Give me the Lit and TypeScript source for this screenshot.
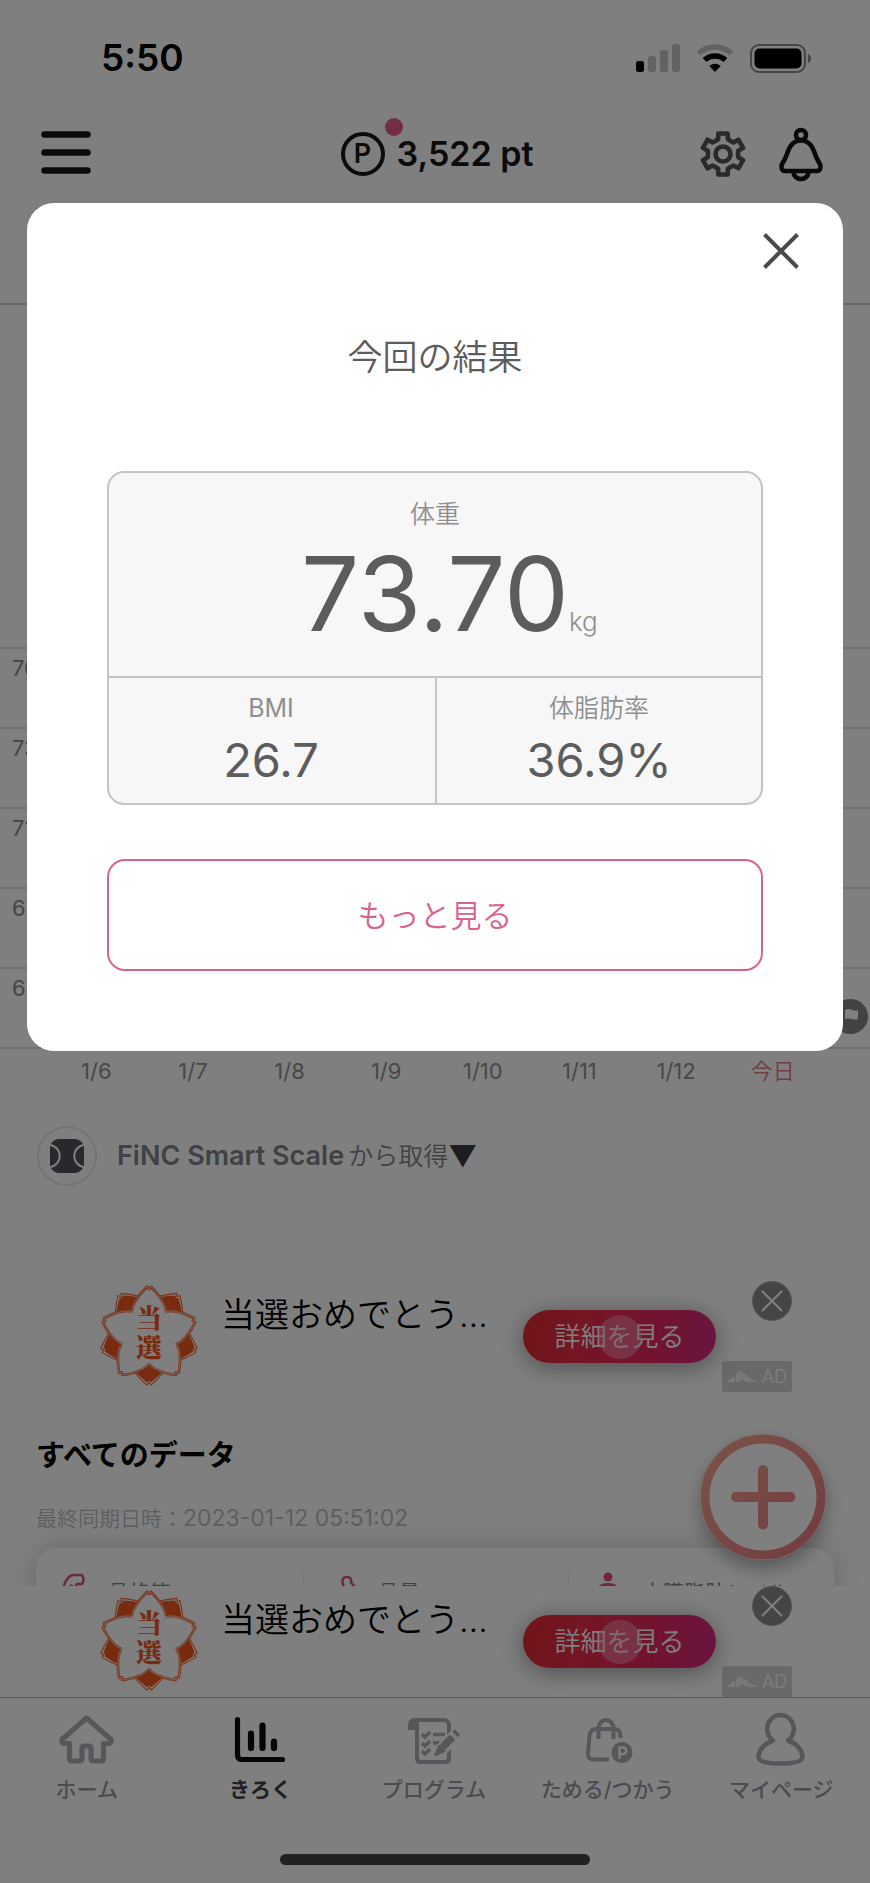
import { LitElement, html, svg, css } from "lit";
import { customElement } from "lit/decorators.js";

const GRID_LABELS = ["76", "73", "71", "68", "66"];
const DATES = ["1/6", "1/7", "1/8", "1/9", "1/10", "1/11", "1/12"];

function gearPath(cx: number, cy: number, outer: number, inner: number, teeth: number): string {
  const step = 360 / teeth;
  const at = (r: number, deg: number) => {
    const a = ((deg - 90) * Math.PI) / 180;
    return `${(cx + r * Math.cos(a)).toFixed(2)} ${(cy + r * Math.sin(a)).toFixed(2)}`;
  };
  const points: string[] = [];
  for (let i = 0; i < teeth; i++) {
    const c = i * step;
    points.push(at(inner, c - 18), at(outer, c - 13), at(outer, c + 13), at(inner, c + 18), at(inner - 0.6, c + 30));
  }
  return `M${points.join("L")}Z`;
}

@customElement("ad-banner")
export class AdBanner extends LitElement {
  static styles = css`
    :host { display: block; background: #fff; }
    .ad {
      display: grid;
      grid-template-columns: 104px 1fr 193px 76px;
      box-sizing: border-box;
      height: 111px;
      margin: 0 78px;
      padding-left: 19px;
    }
    .emblem { width: 104px; height: 104px; margin-top: 2px; border-radius: 22px; background: #fcfcfc; }
    .title {
      margin: 8px 0 0 20px;
      font-size: 34px;
      line-height: 52px;
      font-weight: 350;
      color: #000;
      white-space: nowrap;
    }
    .cta {
      position: relative;
      align-self: start;
      height: 53px;
      margin: 29px 0 0;
      padding: 0;
      border: 0;
      border-radius: 27px;
      background: linear-gradient(100deg, #e02a34, #ea2c48 30%, #e62860 65%, #d42a80);
      box-shadow: 0 4px 24px rgba(0, 0, 0, 0.4);
      color: #fff;
      font: inherit;
      font-size: 26px;
      line-height: 53px;
      font-weight: 350;
    }
    .tap {
      position: absolute;
      left: 50%;
      top: 50%;
      width: 44px;
      height: 44px;
      margin: -22px;
      border-radius: 50%;
      background: rgba(255, 170, 200, 0.45);
    }
    .side { display: flex; flex-direction: column; align-items: flex-end; justify-content: space-between; }
    .close { width: 40px; height: 40px; padding: 0; border: 0; background: none; }
    .badge {
      display: flex;
      align-items: center;
      justify-content: space-between;
      box-sizing: border-box;
      width: 70px;
      height: 31px;
      padding: 0 5px 0 4px;
      border-radius: 3px;
      background: #d2d2d5;
      color: #fff;
      font-size: 18px;
      font-weight: 300;
    }
    svg { display: block; }
  `;

  render() {
    const turns = [0, 72, 144, 216, 288];
    return html`
      <div class="ad">
        <svg class="emblem" viewBox="-52 -52 104 104" role="img" aria-label="当選">
          ${turns.map((t) => svg`
            <g transform="rotate(${t + 36})">
              <path d="M0 -24 L-15 -37 Q-8 -45 -2 -50 L0 -47.500 L2 -50 Q8 -45 15 -37Z" fill="#fff" stroke="#f0622c" stroke-width="1.1"/>
              <path d="M0 -24 L-14 -36.500 Q-7 -44 -1.500 -47.500 L0 -45.500 L1.500 -47.500 Q7 -44 14 -36.500Z" fill="#f0561c"/>
            </g>`)}
          ${turns.map((t) => svg`
            <g transform="rotate(${t})">
              <path d="M0 0 L-17 -23.400 C-17 -31 -9 -41 -2 -48 L0 -46 L2 -48 C9 -41 17 -31 17 -23.400Z" fill="#fff"/>
              <path d="M-17 -23.400 C-17 -31 -9 -41 -2 -48 L0 -46 L2 -48 C9 -41 17 -31 17 -23.400" fill="none" stroke="#f0622c" stroke-width="2.600" stroke-linejoin="round"/>
              <path d="M-17 -23.400 C-17 -31 -9 -41 -2 -48 L0 -46 L2 -48 C9 -41 17 -31 17 -23.400" fill="none" stroke="#f8e4da" stroke-width=".8"/>
            </g>`)}
          <g fill="#f0561c" font-family="Noto Serif CJK JP, Noto Sans CJK JP, sans-serif" font-weight="900" font-size="26" text-anchor="middle">
            <text x="0" y="-7">当</text>
            <text x="0" y="22">選</text>
          </g>
        </svg>
        <div class="title">当選おめでとう…</div>
        <button class="cta" type="button">詳細を見る<span class="tap"></span></button>
        <div class="side">
          <button class="close" type="button" aria-label="広告を閉じる">
            <svg width="40" height="40" viewBox="0 0 40 40">
              <circle cx="20" cy="20" r="19.500" fill="#8a8a90" stroke="#a4a4a8"/>
              <path d="M10.500 10.500l19 19M29.500 10.500l-19 19" stroke="#fff" stroke-width="2" stroke-linecap="round"/>
            </svg>
          </button>
          <div class="badge">
            <svg width="31" height="14" viewBox="0 0 31 14" fill="#f4f4f4">
              <path d="M0 12L9 6v6zM10 5l3-3v10h-3zM13.500 1l4 2v7h-4zM18 3.500l3 2V12l-3-1zM21.500 6l4 3v3.500h-4zM26 9l5 3h-5z"/>
            </svg>
            <span>AD</span>
          </div>
        </div>
      </div>
    `;
  }
}

@customElement("result-dialog")
export class ResultDialog extends LitElement {
  static styles = css`
    :host { display: block; }
    .dialog {
      display: flex;
      flex-direction: column;
      margin: 203px 27px 0;
      padding: 25px 39px 80px 80px;
      border-radius: 27px;
      background: #fff;
      color: #5c5c5c;
    }
    .close { align-self: flex-end; width: 46px; height: 46px; padding: 0; border: 0; background: none; }
    .close svg { display: block; }
    .body { padding-right: 41px; }
    h1 {
      margin: 55px 0 86px;
      font-size: 35px;
      line-height: 56px;
      font-weight: 350;
      text-align: center;
    }
    .results {
      display: grid;
      grid-template-columns: 1fr 1fr;
      margin: 0;
      border: 2px solid #c4c4c4;
      border-radius: 17px;
      background: #f7f7f7;
      text-align: center;
    }
    .cell { box-sizing: border-box; height: 125px; padding-top: 11px; }
    .weight { grid-column: 1 / -1; height: 205px; padding-top: 22px; border-bottom: 2px solid #c4c4c4; }
    .fat { border-left: 2px solid #c4c4c4; }
    dt { font-size: 25px; line-height: 38px; font-weight: 350; color: #8f8f8f; }
    .bmi { padding-right: 2px; }
    .bmi dt { font-weight: 400; }
    dd { margin: 0; font-size: 47px; line-height: 66px; }
    .weight dd { position: relative; display: inline-block; font-size: 103px; line-height: 122px; }
    .unit {
      position: absolute;
      left: 100%;
      bottom: 14px;
      font-size: 26px;
      line-height: 38px;
      font-weight: 350;
      color: #8f8f8f;
    }
    .more {
      display: block;
      width: 100%;
      height: 112px;
      margin-top: 54px;
      padding: 0 0 4px;
      border: 2px solid #d9638f;
      border-radius: 18px;
      background: #fff;
      color: #d9638f;
      font: inherit;
      font-size: 31px;
      font-weight: 350;
    }
  `;

  render() {
    return html`
      <section class="dialog" role="dialog" aria-labelledby="title">
        <button class="close" type="button" aria-label="閉じる">
          <svg width="46" height="46" viewBox="0 0 46 46">
            <path d="M6.500 6.500l33 33M39.500 6.500l-33 33" stroke="#4a4a4a" stroke-width="4"/>
          </svg>
        </button>
        <div class="body">
          <h1 id="title">今回の結果</h1>
          <dl class="results">
            <div class="cell weight">
              <dt>体重</dt>
              <dd>73.70<span class="unit">kg</span></dd>
            </div>
            <div class="cell bmi">
              <dt>BMI</dt>
              <dd>26.7</dd>
            </div>
            <div class="cell fat">
              <dt>体脂肪率</dt>
              <dd>36.9%</dd>
            </div>
          </dl>
          <button class="more" type="button">もっと見る</button>
        </div>
      </section>
    `;
  }
}

@customElement("app-root")
export class AppRoot extends LitElement {
  static styles = css`
    :host {
      display: block;
      position: relative;
      height: 100vh;
      overflow: hidden;
      background: #fff;
      font-family: Inter, "Noto Sans CJK JP", sans-serif;
    }
    svg { display: block; }
    button { padding: 0; border: 0; background: none; font: inherit; color: inherit; }
    .app { display: flex; flex-direction: column; height: 100%; }
    .status {
      display: flex;
      align-items: center;
      flex: none;
      height: 116px;
      padding: 0 59px 0 101px;
    }
    .time { flex: 1; font-size: 37px; line-height: 46px; font-weight: 600; color: #000; }
    .signals { display: flex; align-items: center; gap: 16px; }
    .header {
      display: grid;
      grid-template-columns: 1fr auto 1fr;
      align-items: center;
      flex: none;
      height: 76px;
      padding: 0 45px 0 41px;
      color: #161618;
    }
    .points {
      display: flex;
      align-items: center;
      gap: 12px;
      margin-left: 8px;
      font-size: 34px;
      line-height: 42px;
      font-weight: 600;
    }
    .coin {
      position: relative;
      display: flex;
      align-items: center;
      justify-content: center;
      box-sizing: border-box;
      width: 44px;
      height: 44px;
      border: 4px solid #161618;
      border-radius: 50%;
      font-size: 27px;
      font-weight: 600;
    }
    .dot {
      position: absolute;
      right: -22px;
      top: -18px;
      width: 18px;
      height: 18px;
      border-radius: 50%;
      background: #e85a8c;
    }
    .actions { display: flex; align-items: center; justify-content: flex-end; gap: 31px; }
    .scroll { flex: 1; min-height: 0; overflow: hidden; }
    .periods { height: 111px; border-bottom: 2px solid #d4d4d4; }
    .chart { position: relative; padding-top: 342px; }
    .gridrow {
      box-sizing: border-box;
      height: 80px;
      padding: 5px 12px;
      border-top: 2px solid #dedede;
      color: #8c8c8c;
      font-size: 22px;
      line-height: 28px;
    }
    .flag { position: absolute; right: 2px; bottom: 13px; }
    .dates {
      display: grid;
      grid-template-columns: repeat(8, 1fr);
      height: 78px;
      padding: 6px 49px 0 48px;
      border-top: 2px solid #dedede;
      box-sizing: border-box;
      color: #909090;
      font-size: 22px;
      line-height: 32px;
      text-align: center;
    }
    .today { color: #e07a84; font-weight: 350; }
    .source { display: flex; align-items: center; gap: 20px; height: 62px; padding: 0 37px; color: #808388; }
    .device {
      display: grid;
      place-items: center;
      box-sizing: border-box;
      width: 60px;
      height: 60px;
      border: 2px solid #e8e8ea;
      border-radius: 50%;
    }
    .from { display: flex; align-items: center; font-size: 25px; line-height: 38px; font-weight: 350; }
    .from strong { margin-right: 4px; font-size: 27px; font-weight: 600; }
    .from .caret { color: #3a3a3e; font-size: 29px; }
    .inline-ad { margin-top: 94px; }
    h2 { margin: 42px 36px 0; font-size: 29px; line-height: 44px; font-weight: 700; color: #000; }
    .sync { margin: 24px 36px 0; font-size: 21px; line-height: 32px; font-weight: 350; color: #bcbcc2; }
    .sync time { font-size: 23px; font-weight: 400; }
    .metrics {
      display: grid;
      grid-template-columns: repeat(3, 1fr);
      margin: 13px 36px 0;
      padding: 24px 0;
      border-radius: 20px;
      background: #fff;
      box-shadow: 0 0 30px rgba(0, 0, 0, 0.18);
    }
    .metric {
      display: flex;
      gap: 20px;
      height: 80px;
      padding-left: 24px;
      box-sizing: border-box;
      color: #808388;
      font-size: 21px;
      line-height: 42px;
      white-space: nowrap;
    }
    .metric + .metric { border-left: 2px solid #f2f2f2; }
    .bone { margin-left: 8px; }
    .fab {
      position: absolute;
      right: 44px;
      bottom: 323px;
      width: 126px;
      height: 126px;
      border-radius: 50%;
      box-shadow: 0 8px 18px rgba(0, 0, 0, 0.32);
    }
    .bottom-ad { position: relative; flex: none; }
    .tabs {
      display: grid;
      grid-template-columns: repeat(5, minmax(0, 1fr));
      flex: none;
      position: relative;
      box-sizing: border-box;
      height: 157px;
      padding-right: 2px;
      border-top: 1px solid #b4b4b8;
      background: #fff;
    }
    .tab {
      display: flex;
      flex-direction: column;
      align-items: center;
      gap: 6px;
      padding-top: 12px;
      color: #9898a0;
      font-size: 21px;
      line-height: 32px;
      font-weight: 500;
      text-decoration: none;
      white-space: nowrap;
    }
    .tab.active { color: #404044; font-weight: 700; }
    .home-bar { flex: none; height: 29px; position: relative; background: #fff; }
    .home-bar div { width: 310px; height: 11px; margin: 0 auto; border-radius: 6px; background: #424242; }
    .overlay { position: absolute; inset: 0; background: rgba(0, 0, 0, 0.5); }
  `;

  private renderStatus() {
    return html`
      <div class="status">
        <div class="time">5:50</div>
        <div class="signals">
          <svg width="44" height="28" viewBox="0 0 44 28">
            <rect x="0" y="17" width="8" height="11" rx="2.500" fill="#000"/>
            <g fill="#c4c4c4">
              <rect x="12" y="12" width="8" height="16" rx="2.500"/>
              <rect x="24" y="6" width="8" height="22" rx="2.500"/>
              <rect x="36" y="0" width="8" height="28" rx="2.500"/>
            </g>
          </svg>
          <svg width="38" height="28" viewBox="0 0 38 28" fill="none">
            <path d="M2.500 9.500A24 24 0 0 1 35.500 9.500" stroke="#c4c4c4" stroke-width="5.500"/>
            <path d="M8.500 16A15.500 15.500 0 0 1 29.500 16" stroke="#000" stroke-width="5.500"/>
            <path d="M13.200 22Q19 17.500 24.800 22L19 28Z" fill="#000"/>
          </svg>
          <svg width="61" height="29" viewBox="0 0 61 29">
            <rect x="1" y="1" width="54" height="27" rx="8" fill="none" stroke="#8c8c8c" stroke-width="2"/>
            <rect x="4.500" y="4.500" width="47" height="20" rx="5" fill="#000"/>
            <path d="M58 10q3 1 3 4.500t-3 4.500z" fill="#8c8c8c"/>
          </svg>
        </div>
      </div>
    `;
  }

  private renderHeader() {
    return html`
      <header class="header">
        <button type="button" aria-label="メニュー">
          <svg width="50" height="48" viewBox="0 0 50 48" stroke="#161618" stroke-width="6.500" stroke-linecap="round">
            <path d="M3.500 4.500h43M3.500 22.500h43M3.500 40.500h43"/>
          </svg>
        </button>
        <div class="points"><span class="coin">P<span class="dot"></span></span>3,522 pt</div>
        <div class="actions">
          <button type="button" aria-label="設定">
            <svg width="46" height="46" viewBox="0 0 46 46" fill="none" stroke="#545458" stroke-width="4.600" stroke-linejoin="round">
              <path d="${gearPath(23, 23, 21, 15.6, 6)}"/>
              <circle cx="23" cy="23" r="7.500"/>
            </svg>
          </button>
          <button type="button" aria-label="お知らせ">
            <svg width="48" height="56" viewBox="0 0 48 56" fill="none" stroke="#121214" stroke-width="4.600" stroke-linejoin="round">
              <circle cx="24" cy="9" r="5"/>
              <path d="M24 14.500c-10 0-12.500 9-15 16-1.200 3.300-2.600 5-4 7.500-1.500 3.500 0 7 3 7h32c3 0 4.500-3.500 3-7-1.400-2.500-2.800-4.200-4-7.500-2.500-7-5-16-15-16z"/>
              <path d="M16.500 46a7.500 7 0 0 0 15 0"/>
            </svg>
          </button>
        </div>
      </header>
    `;
  }

  private renderTabs() {
    return html`
      <nav class="tabs">
        <a class="tab" href="#home">
          <svg width="58" height="58" viewBox="0 0 58 58" fill="none" stroke="#aeaeb6" stroke-width="5.200" stroke-linejoin="round">
            <path d="M28.500 8L4 29.500Q3 33 6.500 33.500H11.500V48.500q0 2.500 2.500 2.500H21.500q2.500 0 2.500-2.500V38q0-2 2-2h5q2 0 2 2V48.500q0 2.500 2.500 2.500h7.500q2.500 0 2.500-2.500V33.500h5q3.500-.5 2.500-4z"/>
          </svg>
          ホーム
        </a>
        <a class="tab active" href="#record">
          <svg width="58" height="58" viewBox="0 0 58 58" fill="none" stroke="#0a0a0a" stroke-linecap="round">
            <path d="M6.500 9.500V45q0 4.500 4.500 4.500H51.500" stroke-width="5.200"/>
            <path d="M20 23.500v14.500M31.500 15.500v22.500M43 31.500v6.500" stroke-width="6.200"/>
          </svg>
          きろく
        </a>
        <a class="tab" href="#program">
          <svg width="58" height="58" viewBox="0 0 58 58" fill="none" stroke="#aeaeb6" stroke-width="4">
            <path d="M8 10H38q6 0 6 6V48q0 4-4 4H16q-4 0-4-4V19"/>
            <path d="M4 19q-1-10 5-10 5 1 4 10z" fill="#aeaeb6" stroke-width="2"/>
            <path d="M17 24l3 3 5-5M17 33l3 3 5-5M17 41l3 3 5-5" stroke-width="3.500"/>
            <path d="M28 24.500h12M28 33h9" stroke-width="3.500"/>
            <path d="M34 42L54 22" stroke="#fff" stroke-width="13"/>
            <path d="M37.500 37.500L47.500 27" stroke-width="7.500"/>
            <path d="M50 24.500L52.500 22" stroke-width="7.500" stroke-linejoin="round"/>
            <path d="M30.500 45L34 36l5.500 5z" fill="#aeaeb6" stroke-width="2" stroke-linejoin="round"/>
          </svg>
          プログラム
        </a>
        <a class="tab" href="#points">
          <svg width="58" height="58" viewBox="4 0 58 58" fill="none" stroke="#aeaeb6" stroke-width="4">
            <path d="M34 49.500H18.500q-6 0-5.500-6.500L14.500 26q.5-7 7-7H39q6 0 6.500 7v2"/>
            <path d="M23.500 29V18.500a7.500 8.500 0 0 1 15 0V29"/>
            <circle cx="47" cy="42.500" r="10.500" fill="#aeaeb6" stroke="none"/>
            <path d="M44.500 48.500V37.500h3.500a3 3 0 0 1 0 6.500h-3.500" stroke="#fff" stroke-width="2.500"/>
          </svg>
          ためる/つかう
        </a>
        <a class="tab" href="#mypage">
          <svg width="58" height="58" viewBox="0 0 58 58" fill="none" stroke="#aeaeb6" stroke-width="4.600" stroke-linejoin="round">
            <path d="M21 30.500A13.300 14 0 1 1 36 30.500C45.500 34 50.500 41 50.500 47c0 5-9 6.500-22 6.500s-22-1.500-22-6.500c0-6 5-13 14.500-16.500z"/>
          </svg>
          マイページ
        </a>
      </nav>
    `;
  }

  render() {
    return html`
      <div class="app">
        ${this.renderStatus()} ${this.renderHeader()}
        <main class="scroll">
          <div class="periods"></div>
          <div class="chart">
            ${GRID_LABELS.map((l) => html`<div class="gridrow">${l}</div>`)}
            <svg class="flag" width="35" height="35" viewBox="0 0 35 35">
              <circle cx="17.500" cy="17.500" r="17.500" fill="#848484"/>
              <path d="M12 11q4-2 7 0 3 1 6 0v9q-3 1-6 0-3-1-7 0z" fill="#fff"/>
            </svg>
          </div>
          <div class="dates">
            ${DATES.map((d) => html`<span>${d}</span>`)}
            <span class="today">今日</span>
          </div>
          <div class="source">
            <div class="device">
              <svg width="34" height="34" viewBox="0 0 34 34">
                <path d="M9 0H25Q31 0 34 7V27Q31 34 25 34H9Q3 34 0 27V7Q3 0 9 0Z" fill="#505258"/>
                <path d="M0 6C13 8 13 26 0 28M34 6C21 8 21 26 34 28" fill="none" stroke="#fff" stroke-width="2"/>
              </svg>
            </div>
            <div class="from"><strong>FiNC Smart Scale</strong><span>から取得</span><span class="caret">▼</span></div>
          </div>
          <ad-banner class="inline-ad"></ad-banner>
          <h2>すべてのデータ</h2>
          <p class="sync">最終同期日時：<time>2023-01-12 05:51:02</time></p>
          <div class="metrics">
            <div class="metric">
              <svg width="28" height="30" viewBox="0 0 28 30" fill="none" stroke="#d8508a" stroke-width="2.500">
                <path d="M2 20Q6 3 14 3h8q3 5 0 9h-5l-2 4-5-3M10 13l4 4"/>
              </svg>
              骨格筋
            </div>
            <div class="metric">
              <svg class="bone" width="22" height="30" viewBox="0 0 22 30" fill="none" stroke="#d8508a" stroke-width="2.500">
                <path d="M2 20q6-3 5-8-2-7 4-7 5 0 4 6 6 4 4 9"/>
              </svg>
              骨量
            </div>
            <div class="metric">
              <svg width="28" height="30" viewBox="0 0 28 30" fill="#d8508a">
                <circle cx="14" cy="5" r="4.500"/><path d="M3 17q2-6 11-6t11 6z"/>
              </svg>
              内臓脂肪レベル
            </div>
          </div>
        </main>
        <button class="fab" type="button" aria-label="追加">
          <svg width="126" height="126" viewBox="0 0 126 126">
            <defs>
              <linearGradient id="warm" gradientUnits="userSpaceOnUse" x1="10" y1="20" x2="110" y2="110">
                <stop offset="0" stop-color="#f2a48e"/><stop offset="1" stop-color="#ea7c84"/>
              </linearGradient>
            </defs>
            <circle cx="63" cy="63" r="58" fill="#fff" stroke="url(#warm)" stroke-width="9"/>
            <path d="M63 36v54.500M36 63h54.500" stroke="url(#warm)" stroke-width="10" stroke-linecap="round"/>
          </svg>
        </button>
        <ad-banner class="bottom-ad"></ad-banner>
        ${this.renderTabs()}
        <div class="home-bar"><div></div></div>
      </div>
      <div class="overlay"><result-dialog></result-dialog></div>
    `;
  }
}
